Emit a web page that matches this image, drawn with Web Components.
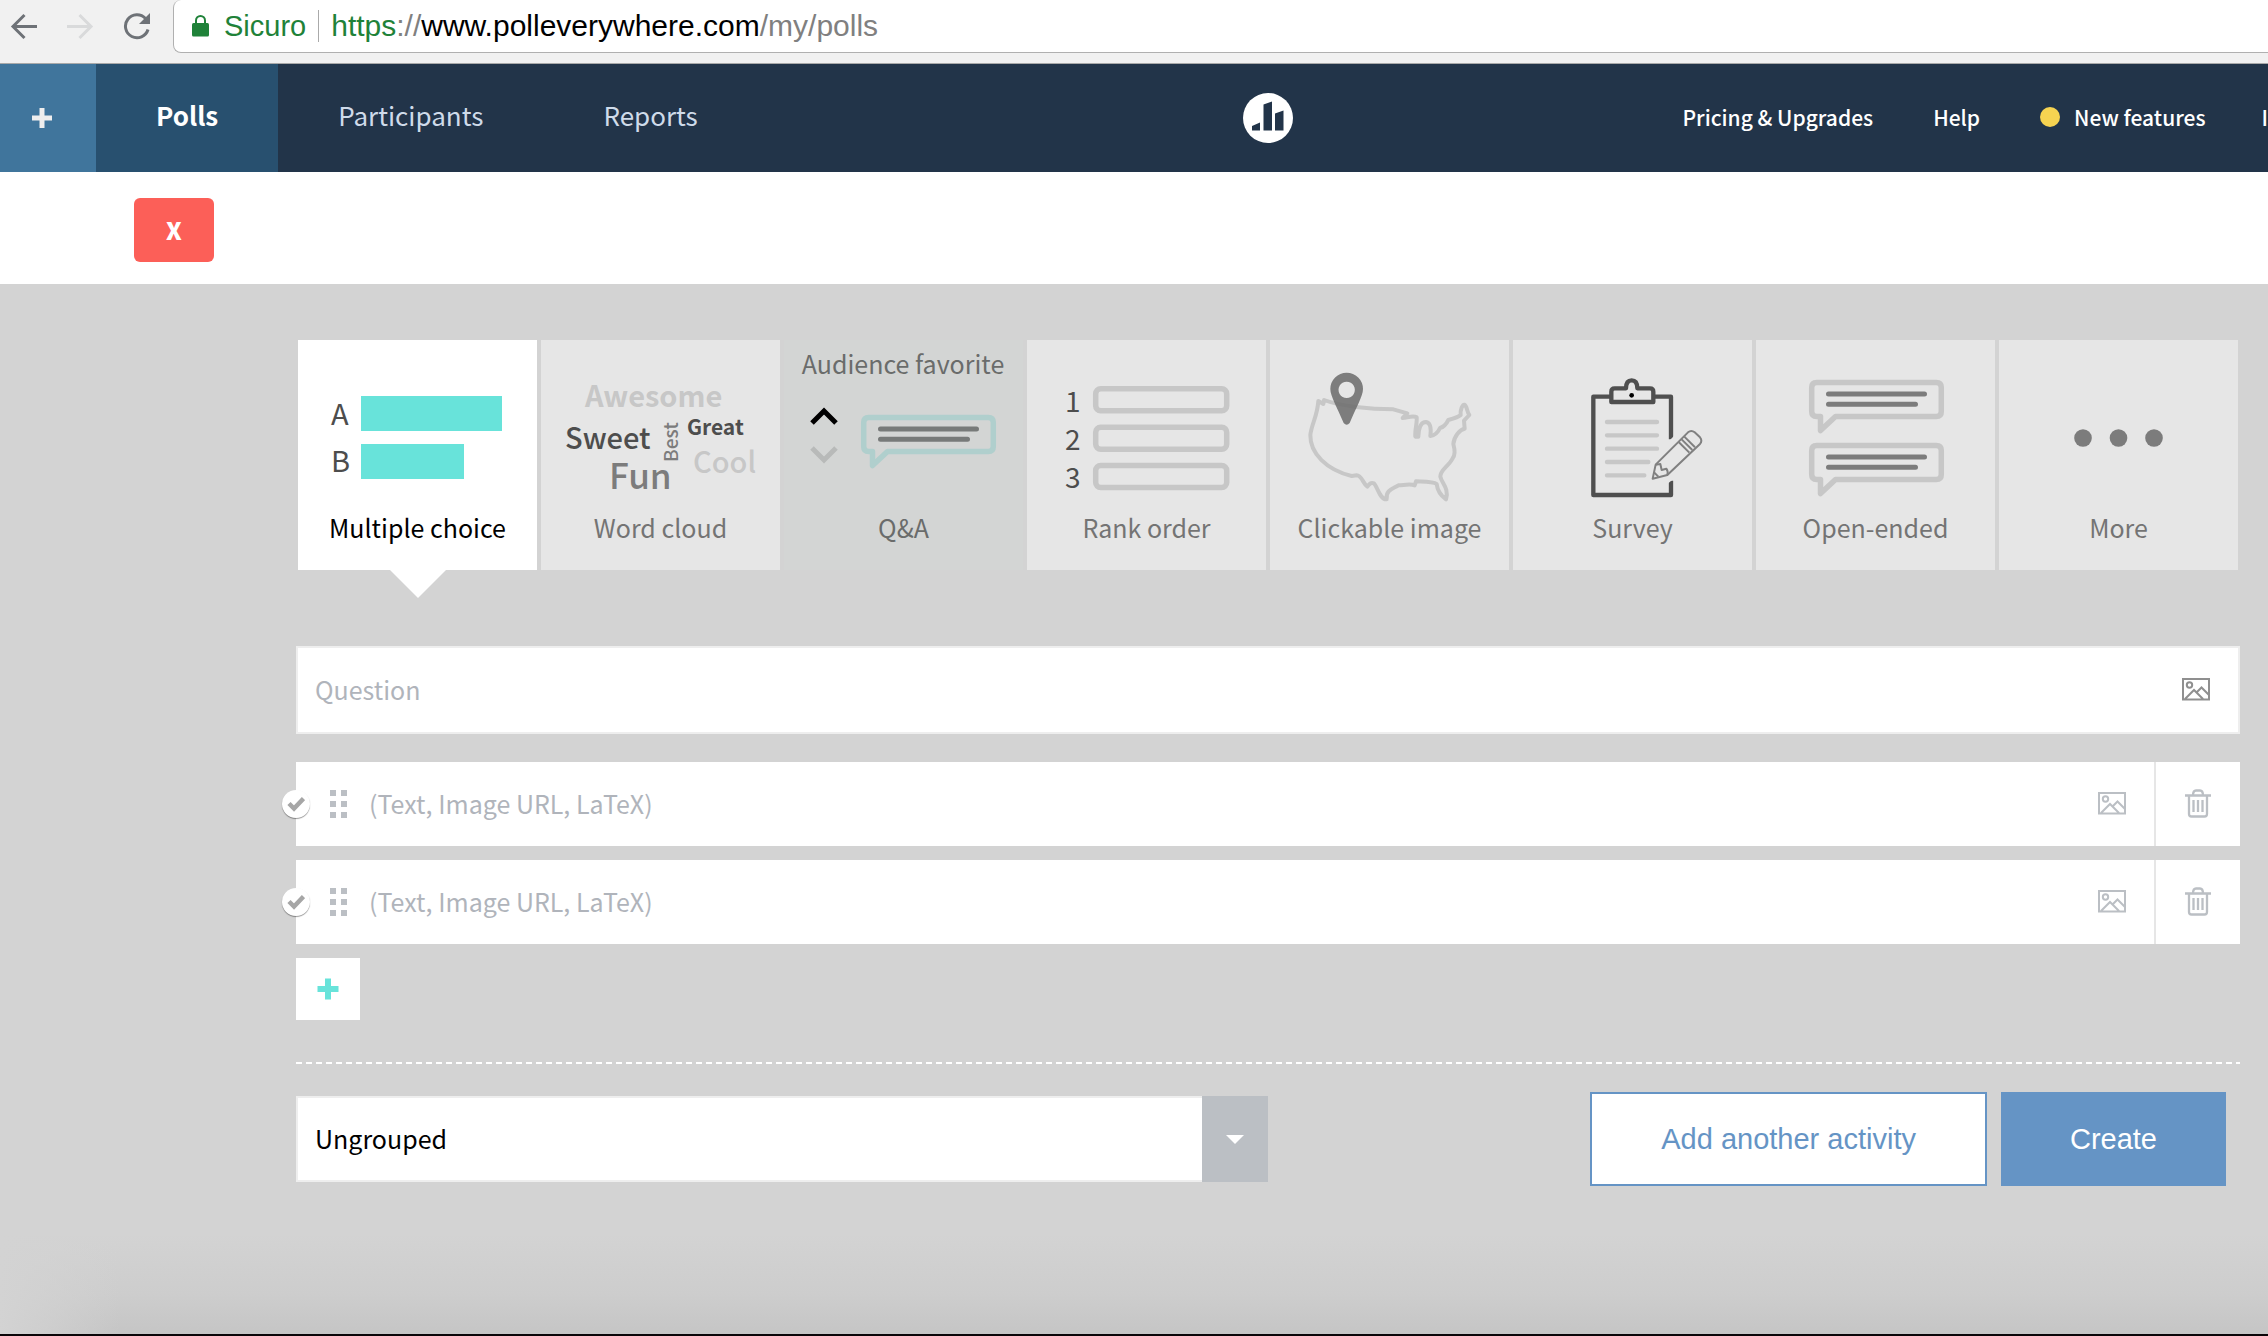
<!DOCTYPE html>
<html lang="en">
<head>
<meta charset="utf-8">
<title>My polls</title>
<style>
  html, body { margin: 0; height: 100%; }
  body { font-family: "Noto Sans CJK SC", "Open Sans", sans-serif; font-size: 25px; line-height: 32px; background: #d3d3d3; overflow: hidden; }
</style>
</head>
<body>
<poll-app></poll-app>

<template id="t-app">
  <style>
    :host { display: flex; flex-direction: column; min-height: 100vh; box-sizing: border-box; border-bottom: 2px solid #0a0508; }
    main { flex: 1; display: flex; flex-direction: column; padding: 56px 28px 0 296px;
      background: linear-gradient(to right, #d3d3d3, rgba(211,211,211,0) 120px), linear-gradient(to top, #c5c5c5, #cdcdcd 40px, #d3d3d3 100px); }
    .strip { background: #fff; padding: 26px 134px 22px; display: flex; }
    .close { width: 80px; height: 64px; border: 0; border-radius: 6px; background: #fc5f58; color: #fff; font: 900 24px/32px "Noto Sans CJK SC", sans-serif; padding: 0; }
    .tiles { display: grid; grid-template-columns: repeat(8, minmax(0, 1fr)); gap: 4px; margin: 0 2px 76px; }
    .answers { display: flex; flex-direction: column; gap: 14px; margin-top: 28px; align-items: stretch; }
    .add { width: 64px; height: 62px; background: #fff; border: 0; padding: 0; display: grid; place-items: center; }
    .foot { padding: 28px 14px 0 0; display: flex; align-items: center; justify-content: space-between; }
    hr { margin: 42px 0 0; border: 0; height: 2px; background: repeating-linear-gradient(to right, #fff 0 6px, transparent 6px 10px); }
    .actions { display: flex; gap: 14px; }
    group-select { width: calc(50% + 7px); }
  </style>
  <browser-bar></browser-bar>
  <site-nav></site-nav>
  <div class="strip"><button class="close" aria-label="Close">X</button></div>
  <main>
    <div class="tiles">
      <type-tile label="Multiple choice" selected>
        <svg width="239" height="171" viewBox="0 0 239 171"><g font-size="29" fill="#4d4d4d"><text x="33" y="85">A</text><text x="33" y="132">B</text></g><path fill="#68e3da" d="M63 56h141v35H63zM63 104h103v35H63z"/></svg>
      </type-tile>
      <type-tile label="Word cloud">
        <svg width="239" height="171" viewBox="0 0 239 171" font-weight="500"><g fill="#c7c7c7"><text x="44" y="67" font-size="29" font-weight="700">Awesome</text><text x="152" y="133" font-size="29">Cool</text></g><g fill="#4d4d4d"><text x="24" y="109" font-size="29">Sweet</text><text x="146" y="95" font-size="21" font-weight="700">Great</text></g><g fill="#7c7c7c"><text x="68" y="149" font-size="35">Fun</text><text font-size="19" transform="translate(137 122) rotate(-90)">Best</text></g></svg>
      </type-tile>
      <type-tile label="Q&amp;A" hovered>
        <svg width="239" height="171" viewBox="0 0 239 171" fill="none" stroke-width="5"><text x="119" y="34" font-size="25" text-anchor="middle" fill="#6a6c6b">Audience favorite</text><path stroke="#000" d="M28 83l12-12 12 12"/><path stroke="#b8bab9" d="M28 108l12 12 12-12"/><path stroke="#b0cfcd" stroke-width="5.5" stroke-linejoin="round" d="M84.7 77.5h119.6q5 0 5 5v24q0 5-5 5H103.5L88.5 125.500V111.500H84.700q-5 0-5-5v-24q0-5 5-5z"/><path stroke="#777a79" stroke-linecap="round" d="M96.500 89h96M96.500 99.300h87"/></svg>
      </type-tile>
      <type-tile label="Rank order">
        <svg width="239" height="171" viewBox="0 0 239 171"><g font-size="28" fill="#4d4d4d"><text x="38" y="72">1</text><text x="38" y="110">2</text><text x="38" y="148">3</text></g><g fill="none" stroke="#c7c7c7" stroke-width="5.5"><rect x="68.700" y="48.700" width="131" height="22" rx="5"/><rect x="68.700" y="87.200" width="131" height="22" rx="5"/><rect x="68.700" y="125.500" width="131" height="22" rx="5"/></g></svg>
      </type-tile>
      <type-tile label="Clickable image">
        <svg width="239" height="171" viewBox="0 0 239 171"><g transform="translate(-10 -20) scale(.33333)"><path fill="none" stroke="#c7c7c7" stroke-width="12" stroke-linejoin="round" d="M175 243L190 252L192 240C240 258 330 268 400 268L442 280L428 294C445 292 460 286 470 292C472 310 464 330 466 350L475 350C476 320 485 306 498 306C512 308 514 325 511 348C528 346 535 335 540 324C555 320 560 310 565 300C580 296 595 292 602 285C600 270 608 253 613 254C622 258 620 275 628 285L612 302L614 326C600 328 582 350 580 372C585 390 586 405 578 415C565 440 540 450 541 470C545 490 568 505 558 538C540 525 532 510 530 492C520 484 490 485 468 484L464 496C450 490 430 496 415 496C400 506 376 510 380 538C360 540 352 500 342 490C332 486 328 492 322 500C310 492 305 466 290 466L275 468C200 450 150 400 151 345C155 310 172 290 175 243Z"/><path fill="#6d6d6d" fill-opacity=".87" fill-rule="evenodd" d="M260 158a49 49 0 0 1 49 49c0 22-22 58-40 102q-9 10-18 0c-18-44-40-80-40-102a49 49 0 0 1 49-49zM260 185a24.500 24.500 0 1 0 .1 0z"/></g></svg>
      </type-tile>
      <type-tile label="Survey">
        <svg width="239" height="171" viewBox="0 0 239 171"><g transform="translate(-253 -20) scale(.33333)" fill="none"><path stroke="#4f4f4f" stroke-width="13" stroke-linejoin="round" d="M1050 230H1000V525H1233V482M1183 230H1233V358"/><path fill="#e6e6e6" d="M1222 368l22-22v22zM1222 474h22l-22 18z"/><path stroke="#4f4f4f" stroke-width="13" stroke-linejoin="round" d="M1054 246V215q0-10 10-10H1098C1098 190 1104 181 1115 181C1127 181 1132 190 1132 205H1170q10 0 10 10V246Z"/><circle cx="1115" cy="226" r="7" fill="#000"/><path stroke="#c7c7c7" stroke-width="13" stroke-linecap="round" d="M1041 306H1191M1041 346H1191M1041 386H1191M1041 426H1165M1041 466H1153"/><g stroke="#808080" stroke-width="6" stroke-linejoin="round"><path d="M1178 476L1187 434L1284 337q10-8 20 0L1320 352q8 10 0 20L1222 465Z"/><path d="M1256 366l32 32M1265 358l32 32M1273 350l32 32M1187 434l14-2 4 18 14-4q6 8 3 19M1181 456l14 14"/></g></g></svg>
      </type-tile>
      <type-tile label="Open-ended">
        <svg width="239" height="171" viewBox="0 0 239 171" fill="none"><g id="b" transform="translate(-24 -35)"><path stroke="#c7c7c7" stroke-width="5.500" stroke-linejoin="round" d="M84.700 77.500h119.600q5 0 5 5v24q0 5-5 5H103.500L88.500 125.500V111.500H84.700q-5 0-5-5v-24q0-5 5-5z"/><path stroke="#7c7c7c" stroke-width="5" stroke-linecap="round" d="M96.500 89h96M96.500 99.300h87"/></g><use href="#b" y="63"/></svg>
      </type-tile>
      <type-tile label="More">
        <svg width="239" height="171" viewBox="0 0 239 171" fill="#7c7c7c"><circle cx="84" cy="98" r="8.800"/><circle cx="119.500" cy="98" r="8.800"/><circle cx="155" cy="98" r="8.800"/></svg>
      </type-tile>
    </div>
    <question-field></question-field>
    <div class="answers">
      <answer-row></answer-row>
      <answer-row></answer-row>
      <button class="add" aria-label="Add answer"><svg width="22" height="22" viewBox="0 0 22 22"><path stroke="#68e3da" stroke-width="6" stroke-linecap="square" stroke-linejoin="round" d="M11 3.500v15M3.500 11h15"/></svg></button>
    </div>
    <hr>
    <div class="foot">
      <group-select></group-select>
      <div class="actions">
        <action-button>Add another activity</action-button>
        <action-button primary>Create</action-button>
      </div>
    </div>
  </main>
</template>

<template id="t-bar">
  <style>
    :host { display: flex; box-sizing: border-box; height: 64px; background: #f1f1f1; border-bottom: 1px solid #a9a9a9; font: 30px/32px "Liberation Sans", sans-serif; }
    .btns { flex: none; width: 173px; display: flex; align-items: flex-start; box-sizing: border-box; padding: 12px 0 0 10px; gap: 28px; }
    button { border: 0; padding: 0; background: none; display: block; height: 28px; }
    svg { display: block; }
    .addr { flex: 1; box-sizing: border-box; height: 53px; background: #fff; border: solid #b0b0b0; border-width: 0 0 1px 1px; border-radius: 8px 0 0 8px; display: flex; align-items: center; padding: 0 0 0 18px; white-space: pre; }
    .ok { color: #1f8239; }
    .sec { font-size: 29px; padding: 0 12px 0 15px; border-right: 1px solid #aaa; margin-right: 12px; }
    a { color: #808080; text-decoration: none; } b { font-weight: 400; color: #000; }
  </style>
  <div class="btns">
    <button aria-label="Back"><svg width="28" height="27" viewBox="0 0 28 27" fill="none" stroke="#6e7277" stroke-width="3"><path d="M27 13.500H3M14.500 2L3 13.500L14.500 25"/></svg></button>
    <button aria-label="Forward"><svg width="28" height="27" viewBox="0 0 28 27" fill="none" stroke="#d9dadb" stroke-width="3"><path d="M1 13.500H25M13.500 2L25 13.500L13.500 25"/></svg></button>
    <button aria-label="Reload"><svg width="30" height="28" viewBox="0 0 30 28"><path fill="none" stroke="#6e7277" stroke-width="3" d="M23.500 6.500A11.500 11.500 0 1 0 26 17.500"/><path fill="#6e7277" d="M28 1v11H17z"/></svg></button>
  </div>
  <div class="addr">
    <svg width="17" height="22" viewBox="0 0 17 22"><rect y="8" width="17" height="13.500" rx="1.500" fill="#1f8239"/><path fill="none" stroke="#1f8239" stroke-width="2" d="M4 9V5.500a4.500 4.500 0 0 1 9 0V9"/></svg>
    <span class="sec ok">Sicuro</span>
    <a href="#"><span class="ok">https</span>://<b>www.polleverywhere.com</b>/my/polls</a>
  </div>
</template>

<template id="t-nav">
  <style>
    :host { display: flex; height: 108px; background: #223449; align-items: stretch; overflow: hidden; color: #cfdbea; }
    nav { display: flex; min-width: 0; white-space: nowrap; }
    nav.l { flex: 1243 1 0; font-size: 26px; }
    nav.r { flex: 975 1 0; justify-content: flex-end; font-size: 21px; font-weight: 500; color: #fff; }
    a { color: inherit; text-decoration: none; display: flex; align-items: center; flex: none; }
    .l a { padding: 0 60px 6px; }
    .l .plus { width: 96px; padding: 0 12px 0 0; box-sizing: border-box; background: #40759c; justify-content: center; }
    .l .on { background: #28506f; color: #fff; font-weight: 700; }
    .r a { margin-left: 60px; padding-bottom: 2px; gap: 14px; }
    .r a:last-child { margin-left: 56px; }
    .logo { flex: none; padding: 0; }
    i { width: 20px; height: 20px; border-radius: 50%; background: #f6d351; }
  </style>
  <nav class="l">
    <a class="plus" href="#" aria-label="New"><svg width="20" height="20" viewBox="0 0 20 20"><path stroke="#eee" stroke-width="5" d="M10 0v20M0 10h20"/></svg></a>
    <a class="on" href="#">Polls</a><a href="#">Participants</a><a href="#">Reports</a>
  </nav>
  <a class="logo" href="#" aria-label="Home"><svg width="50" height="50" viewBox="0 0 50 50"><circle cx="25" cy="25" r="25" fill="#fff"/><path fill="#223449" d="M9 33l8-3.500v8H9zM20.500 11.500l8.500-3v29h-8.500zM32 20.500l8.500-3v20H32z"/></svg></a>
  <nav class="r">
    <a href="#">Pricing &amp; Upgrades</a><a href="#">Help</a><a href="#"><i></i>New features</a><a href="#">I</a>
  </nav>
</template>

<template id="t-tile">
  <style>
    :host { display: block; }
    button { width: 100%; border: 0; margin: 0; padding: 0 0 27px; background: #e6e6e6; color: #747474; font: inherit; display: flex; flex-direction: column; align-items: center; position: relative; }
    :host([selected]) button { background: #fff; color: #000; }
    :host([hovered]) button { background: #d3d5d4; color: #6a6c6b; }
    :host([selected]) button::after { content: ""; position: absolute; top: 100%; left: calc(50% - 28px); border: 28px solid transparent; border-top-color: #fff; border-bottom: 0; }
    ::slotted(svg) { display: block; }
  </style>
  <button><slot></slot><span></span></button>
</template>

<template id="t-question">
  <style>
    :host { display: flex; align-items: center; box-sizing: border-box; height: 88px; background: #fff; border: 2px solid #eee; padding: 0 28px 0 17px; }
    input { flex: 1; min-width: 0; border: 0; outline: 0; padding: 0 0 2px; background: none; font: 25px/40px "Noto Sans CJK SC", sans-serif; color: #000; }
    input::placeholder { color: #b0b4bb; opacity: 1; }
    button { border: 0; padding: 0 0 2px; background: none; color: #8f8f8f; display: block; }
    svg { display: block; }
  </style>
  <input placeholder="Question" aria-label="Question">
  <button aria-label="Add image"><svg width="28" height="23" viewBox="0 0 28 23" fill="none" stroke="currentColor" stroke-width="2"><path d="M1 1h26v20.500H1zM3 21L12 12l9 9M14.500 14.500L19.500 9.500L27 17"/><circle cx="7.500" cy="7" r="2.700"/></svg></button>
</template>

<template id="t-answer">
  <style>
    :host { display: flex; align-items: stretch; height: 84px; background: #fff; position: relative; color: #bbbfc4; }
    .body { flex: 1; display: flex; align-items: center; padding: 0 28px 0 34px; min-width: 0; }
    input[type=text] { flex: 1; min-width: 0; border: 0; outline: 0; padding: 0 0 2px; margin-left: 22px; background: none; font: 25px/40px "Noto Sans CJK SC", sans-serif; color: #000; }
    input::placeholder { color: #b0b4bb; opacity: 1; }
    button { border: 0; padding: 0 0 2px; background: none; color: inherit; display: grid; place-items: center; }
    .del { width: 86px; border-left: 2px solid #e6e6e6; }
    label { position: absolute; left: -14px; top: 28px; width: 28px; height: 28px; border-radius: 50%; background: #fff; box-shadow: 0 1px 1px rgba(0,0,0,.4); display: grid; place-items: center; }
    label input { grid-area: 1 / 1; appearance: none; margin: 0; width: 28px; height: 28px; }
    label svg { grid-area: 1 / 1; pointer-events: none; }
    svg { display: block; }
  </style>
  <label><input type="checkbox" aria-label="Correct answer"><svg width="18" height="16" viewBox="0 0 18 16"><path fill="none" stroke="#a6a6a6" stroke-width="4.500" d="M2 7.500L7 12.500L16.500 2.500"/></svg></label>
  <div class="body">
    <svg width="17" height="28" viewBox="0 0 17 28" fill="currentColor"><path d="M0 0h6v6H0zM11 0h6v6h-6zM0 11h6v6H0zM11 11h6v6h-6zM0 22h6v6H0zM11 22h6v6h-6z"/></svg>
    <input type="text" placeholder="(Text, Image URL, LaTeX)" aria-label="Answer">
    <button aria-label="Add image"><svg width="28" height="23" viewBox="0 0 28 23" fill="none" stroke="currentColor" stroke-width="2"><path d="M1 1h26v20.500H1zM3 21L12 12l9 9M14.500 14.500L19.500 9.500L27 17"/><circle cx="7.500" cy="7" r="2.700"/></svg></button>
  </div>
  <button class="del" aria-label="Delete"><svg width="26" height="29" viewBox="0 0 26 29" fill="none" stroke="currentColor" stroke-width="2.300"><path d="M0 6.500h26M8 6.500Q8 1.500 11 1.500h4q3 0 3 5M4 6.500V25q0 2.500 2.500 2.500h13Q22 27.500 22 25V6.500M8.500 11v12M13 11v12M17.500 11v12"/></svg></button>
</template>

<template id="t-select">
  <style>
    :host { display: grid; grid-template-columns: 1fr 66px; height: 86px; }
    select { grid-area: 1 / 1 / 2 / 3; appearance: none; border: 2px solid #eee; border-radius: 0; background: #fff; margin: 0; padding: 0 84px 2px 17px; font: 25px/40px "Noto Sans CJK SC", sans-serif; color: #000; }
    span { grid-area: 1 / 2; background: #bbbfc4; display: grid; place-items: center; pointer-events: none; z-index: 1; }
  </style>
  <select aria-label="Group"><option>Ungrouped</option></select>
  <span><svg width="18" height="9" viewBox="0 0 18 9"><path fill="#fff" d="M0 0h18l-9 9z"/></svg></span>
</template>

<template id="t-action">
  <style>
    :host { display: block; }
    button { height: 94px; padding: 0 69px; border: 2px solid #6594c5; background: #fff; color: #6594c5; font: 29px/32px "Liberation Sans", sans-serif; white-space: nowrap; }
    :host([primary]) button { background: #6594c5; color: #fff; padding: 0 67px; }
  </style>
  <button><slot></slot></button>
</template>

<script>
  const define = (name, tpl, setup) => customElements.define(name, class extends HTMLElement {
    constructor() {
      super();
      this.attachShadow({ mode: "open" }).append(document.getElementById(tpl).content.cloneNode(true));
    }
    connectedCallback() { if (setup) setup(this); }
  });
  define("type-tile", "t-tile", el => { el.shadowRoot.querySelector("span").textContent = el.getAttribute("label"); });
  define("browser-bar", "t-bar");
  define("site-nav", "t-nav");
  define("question-field", "t-question");
  define("answer-row", "t-answer");
  define("group-select", "t-select");
  define("action-button", "t-action");
  define("poll-app", "t-app");
</script>
</body>
</html>
